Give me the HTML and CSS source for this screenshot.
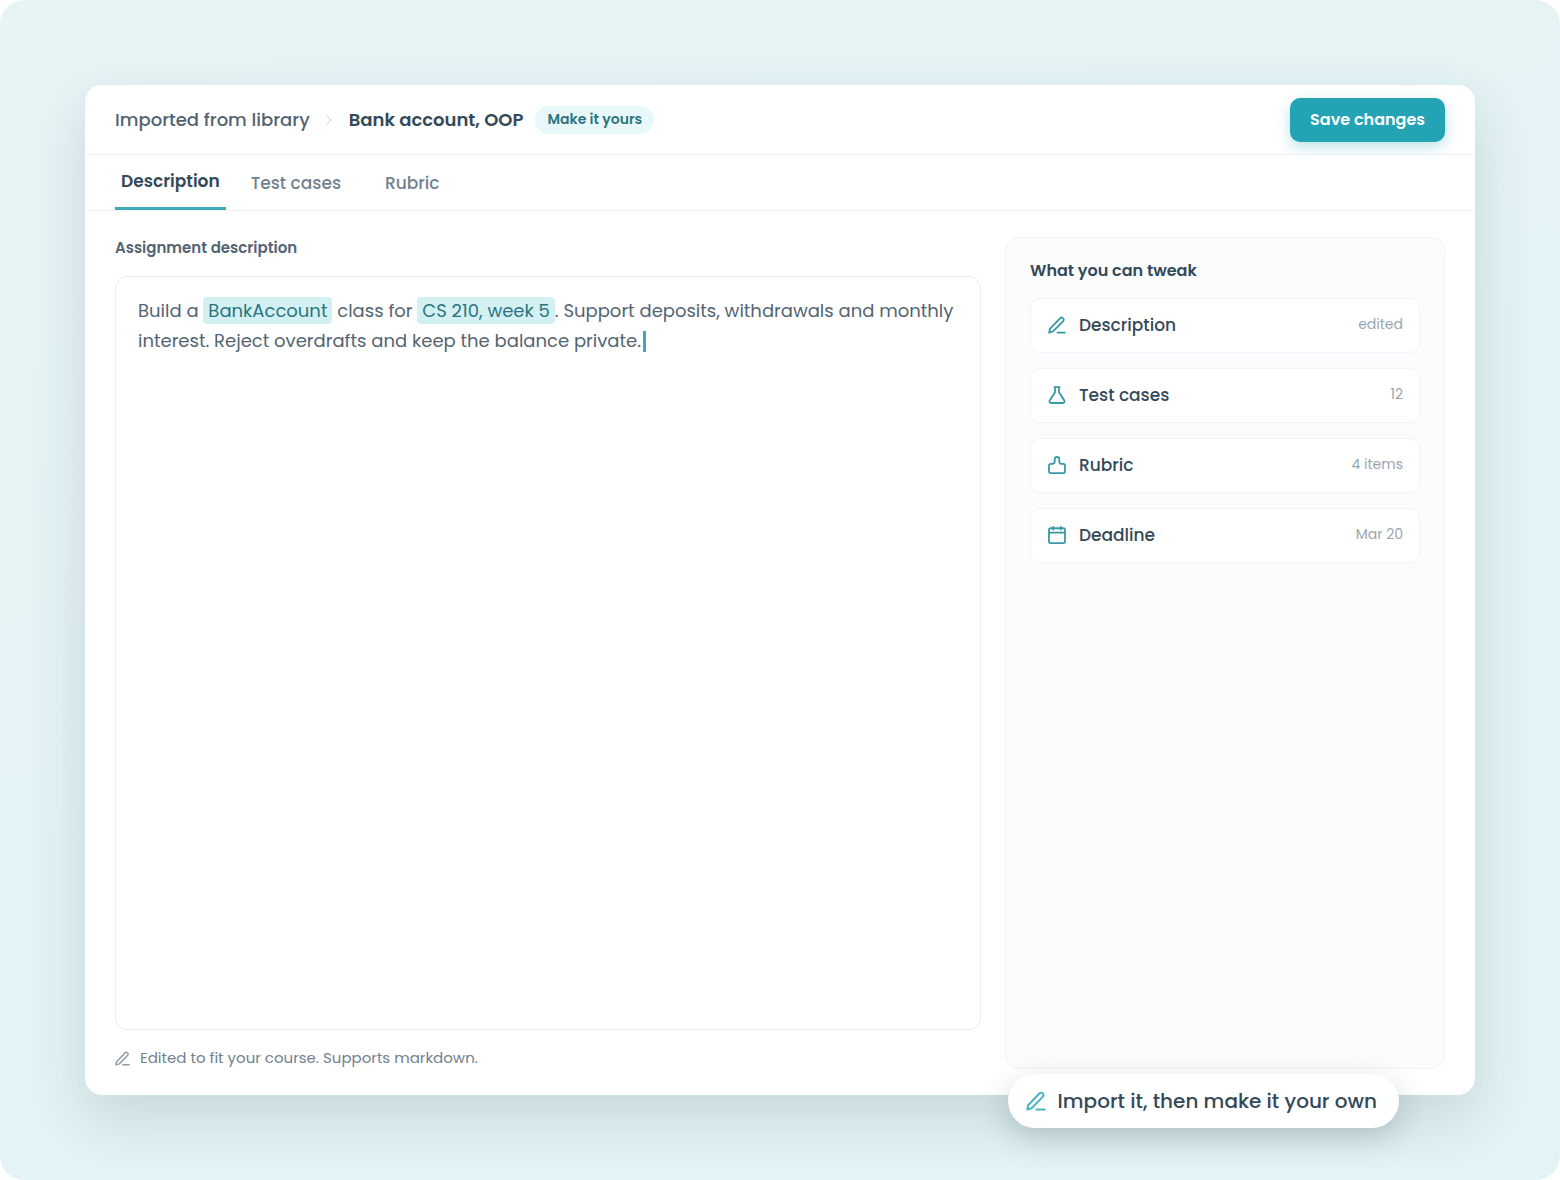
FILE: index.html
```html
<!DOCTYPE html>
<html lang="en">
<head>
<meta charset="utf-8">
<meta name="viewport" content="width=device-width, initial-scale=1">
<title>Bank account, OOP</title>
<link rel="stylesheet" href="styles.css">
</head>
<body>
<svg class="sprite" aria-hidden="true">
  <symbol id="pen" viewBox="0 0 20 20">
    <path d="M1.300 18.500l.8-4.300L13.600 2.300a2 2 0 0 1 2.900 0l.4.4a2 2 0 0 1 0 2.900L5.600 17.200zM10.500 18.400h8.300"/>
  </symbol>
  <symbol id="flask" viewBox="0 0 20 20">
    <path d="M7 1.200h6M7.800 1.200v5.800L1.900 16.200a1.700 1.700 0 0 0 1.400 2.700h13.400a1.700 1.700 0 0 0 1.400-2.700L12.200 7V1.200"/>
  </symbol>
  <symbol id="rubric" viewBox="0 0 20 20">
    <path d="M1.100 10.600A1.800 1.800 0 0 1 2.900 8.800h2.300C6.900 8.800 7.500 7.600 7.500 5.600V3.600a2.500 2.500 0 0 1 5 0v2C12.500 7.600 13.100 8.800 14.800 8.800h2.300a1.800 1.800 0 0 1 1.800 1.800V17a2 2 0 0 1-2 2H3.100a2 2 0 0 1-2-2z"/>
  </symbol>
  <symbol id="calendar" viewBox="0 0 20 20">
    <path d="M2.800 2.500h14.400a1.700 1.700 0 0 1 1.700 1.700v13a1.800 1.800 0 0 1-1.800 1.800H2.900a1.800 1.800 0 0 1-1.800-1.800v-13a1.700 1.700 0 0 1 1.700-1.700zM1.100 7.400h17.800M5.800 1v3M14.200 1v3"/>
  </symbol>
  <symbol id="chevron" viewBox="0 0 8 12">
    <path d="M2 2l4 4-4 4"/>
  </symbol>
</svg>
<main class="stage">
  <section class="window">
    <header class="header">
      <nav class="crumbs" aria-label="Breadcrumb">
        <a class="crumb-link" href="#library">Imported from library</a>
        <svg class="icon chevron" aria-hidden="true"><use href="#chevron"/></svg>
        <h1 class="crumb-title">Bank account, OOP</h1>
        <span class="badge">Make it yours</span>
      </nav>
      <button class="save" type="button">Save changes</button>
    </header>
    <div class="tabs" role="tablist">
      <button class="tab tab-active" type="button" role="tab" aria-selected="true">Description</button>
      <button class="tab" type="button" role="tab" aria-selected="false">Test cases</button>
      <button class="tab" type="button" role="tab" aria-selected="false">Rubric</button>
    </div>
    <div class="body">
      <div class="edit">
        <span class="label" id="description-label">Assignment description</span>
        <div class="editor" role="textbox" aria-multiline="true" aria-labelledby="description-label" contenteditable="true" spellcheck="false">Build a <mark class="mark">BankAccount</mark> class for <mark class="mark">CS 210, week 5</mark>. Support deposits, withdrawals and monthly interest. Reject overdrafts and keep the balance private.<span class="caret"></span></div>
        <p class="hint"><svg class="icon hint-icon" aria-hidden="true"><use href="#pen"/></svg>Edited to fit your course. Supports markdown.</p>
      </div>
      <aside class="tweaks">
        <h2 class="tweaks-title">What you can tweak</h2>
        <a class="row" href="#description"><svg class="icon" aria-hidden="true"><use href="#pen"/></svg><span class="row-name">Description</span><span class="row-value">edited</span></a>
        <a class="row" href="#tests"><svg class="icon" aria-hidden="true"><use href="#flask"/></svg><span class="row-name">Test cases</span><span class="row-value">12</span></a>
        <a class="row" href="#rubric-items"><svg class="icon" aria-hidden="true"><use href="#rubric"/></svg><span class="row-name">Rubric</span><span class="row-value">4 items</span></a>
        <a class="row" href="#deadline"><svg class="icon" aria-hidden="true"><use href="#calendar"/></svg><span class="row-name">Deadline</span><span class="row-value">Mar 20</span></a>
      </aside>
    </div>
    <div class="callout"><svg class="icon callout-icon" aria-hidden="true"><use href="#pen"/></svg>Import it, then make it your own</div>
  </section>
</main>
</body>
</html>
```
FILE: styles.css
```css
* { box-sizing: border-box; }

body {
  margin: 0;
  background: #fff;
  color: #344958;
  font-family: Poppins, Inter, sans-serif;
  font-size: 18px;
}

h1, h2, p { margin: 0; }
a { color: inherit; text-decoration: none; }
button { border: 0; font: inherit; cursor: pointer; }

.sprite { position: absolute; width: 0; height: 0; }

.icon {
  flex: none;
  width: 18px;
  height: 18px;
  fill: none;
  stroke: #3799a6;
  stroke-width: 2;
  stroke-linecap: round;
  stroke-linejoin: round;
}

.stage {
  display: flex;
  min-height: 100vh;
  padding: 85px;
  border-radius: 24px;
  background: linear-gradient(160deg, #e7f4f6, #e4f3f5 50%, #e4f3f5);
}

.window {
  position: relative;
  display: flex;
  flex: 1;
  flex-direction: column;
  min-width: 0;
  border-radius: 17px;
  background: #fff;
  box-shadow: 0 22px 56px rgba(40, 70, 80, 0.16);
}

.header {
  display: flex;
  align-items: center;
  justify-content: space-between;
  min-height: 70px;
  padding: 12px 30px;
  border-bottom: 1px solid #eef3f5;
}

.crumbs { display: flex; align-items: center; }
.crumb-link { color: #536472; font-weight: 500; }
.chevron { width: 8px; height: 12px; margin: 0 16px 0 15px; stroke: #c6d6d9; stroke-width: 1; }
.crumb-title { font-size: 18px; font-weight: 600; }

.badge {
  margin-left: 12px;
  padding: 0 12px 2px;
  border-radius: 14px;
  background: #e8f7f9;
  color: #2a7580;
  font-size: 14px;
  font-weight: 600;
  line-height: 26px;
}

.save {
  height: 44px;
  padding: 0 20px;
  border-radius: 10px;
  background: #24a3b5;
  box-shadow: 0 5px 14px rgba(36, 163, 181, 0.3);
  color: #fff;
  font-size: 16px;
  font-weight: 600;
}

.tabs {
  display: flex;
  gap: 6px;
  height: 56px;
  padding: 0 30px;
  border-bottom: 1px solid #eef3f5;
}

.tab {
  padding: 0 19px;
  background: none;
  color: #71818e;
  font-size: 17px;
  font-weight: 500;
}

.tab-active {
  padding: 0 6px;
  border-bottom: 3px solid #3ea9b8;
  color: #344958;
  font-weight: 600;
}

.body {
  display: grid;
  flex: 1;
  grid-template-columns: minmax(0, 1fr) 440px;
  gap: 24px;
  padding: 26px 30px;
}

.edit { display: flex; flex-direction: column; gap: 17px; }
.label { color: #536472; font-size: 15px; font-weight: 600; line-height: 22px; }

.editor {
  flex: 1;
  padding: 19px 22px;
  border: 1px solid #e6eef1;
  border-radius: 12px;
  color: #536472;
  font-size: 18px;
  line-height: 30px;
  outline: 0;
}

.mark {
  padding: 1px 5px;
  border-radius: 4px;
  background: #d3f0f3;
  color: #2a7580;
}

.caret {
  display: inline-block;
  width: 3px;
  height: 21px;
  margin-left: 2px;
  background: #3ea9b8;
  vertical-align: -5px;
}

.hint {
  display: flex;
  align-items: center;
  gap: 10px;
  color: #71818e;
  font-size: 15px;
  line-height: 22px;
}

.hint-icon { width: 15px; height: 15px; stroke: #8e9ca5; }

.tweaks {
  display: flex;
  flex-direction: column;
  gap: 15px;
  padding: 21px 24px;
  border: 1px solid #eff4f6;
  border-radius: 14px;
  background: #fafcfd;
}

.tweaks-title { font-size: 16px; font-weight: 600; line-height: 24px; }

.row {
  display: flex;
  align-items: center;
  gap: 13px;
  height: 55px;
  padding: 0 16px 2px 17px;
  border: 1px solid #eff4f6;
  border-radius: 10px;
  background: #fff;
}

.row-name { flex: 1; font-size: 17px; font-weight: 500; }
.row-value { color: #9aa6ae; font-size: 14px; }

.callout {
  position: absolute;
  right: 76px;
  bottom: -33px;
  display: flex;
  align-items: center;
  gap: 12px;
  height: 54px;
  padding: 0 22px 0 18px;
  border-radius: 27px;
  background: #fff;
  box-shadow: 0 10px 30px rgba(30, 60, 70, 0.22);
  font-size: 20px;
  font-weight: 500;
  white-space: nowrap;
}

.callout-icon { width: 20px; height: 20px; stroke: #4bb3c1; }
```
